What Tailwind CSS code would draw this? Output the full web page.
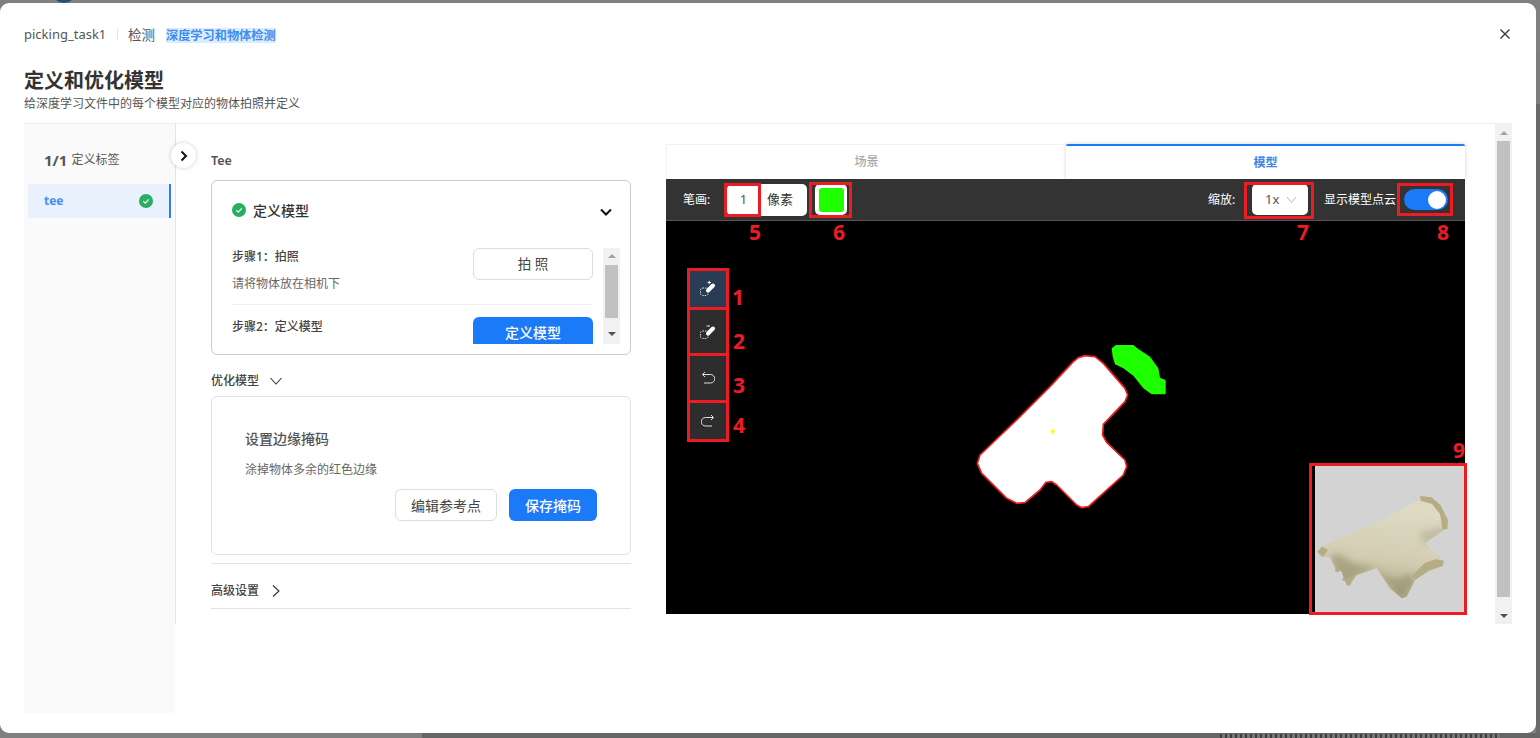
<!doctype html>
<html lang="zh-CN">
  <head>
    <meta charset="UTF-8" />
    <title>定义和优化模型</title>
    <script src="https://cdn.jsdelivr.net/npm/@tailwindcss/browser@4"></script>
  </head>
  <body class="bg-[#808080] overflow-hidden font-['Noto_Sans','Noto_Sans_CJK_SC',sans-serif]">
    <div class="relative w-[1540px] h-[738px] overflow-hidden">
      <!-- Dimmed page behind the dialog -->
      <div class="absolute left-[52px] top-[-10px] w-[24px] h-[13px] rounded-b-full bg-[#22507c]"></div>
      <div class="absolute left-[1536px] top-[52px] w-[4px] h-[52px] bg-[#7c7c7c]"></div>
      <div class="absolute left-[1536px] top-[104px] w-[4px] h-[634px] bg-[#6a6a6a]"></div>
      <div class="absolute left-[422px] top-[733px] w-[1118px] h-[5px] bg-[#666666]"></div>
      <div class="absolute left-[1220px] top-[734px] w-[280px] h-[4px] bg-[repeating-linear-gradient(90deg,#3f3f3f_0_2px,#777777_2px_5px)]"></div>

      <!-- Dialog -->
      <div class="absolute left-0 top-[3px] w-[1536px] h-[730px] bg-white rounded-[9px] flex flex-col">
        <header class="px-[24px] pt-[22px] relative">
          <div class="flex items-center h-[20px] text-[#555555]">
            <span class="text-[13px] w-[82px]">picking_task1</span>
            <span class="ml-[11px] w-px h-[12px] bg-[#e5e5e5]"></span>
            <span class="ml-[10px] text-[13.5px] w-[28px]">检测</span>
            <span class="ml-[10px] px-0 text-[12.2px] font-bold text-[#3f8df0] bg-[#dcebff] leading-[15px]">深度学习和物体检测</span>
          </div>
          <h1 class="mt-[24px] text-[20px] leading-[24px] font-bold text-[#333333]">定义和优化模型</h1>
          <p class="mt-[3px] text-[12px] leading-[16px] text-[#555555]">给深度学习文件中的每个模型对应的物体拍照并定义</p>
          <button class="absolute right-[23px] top-[23px] w-[16px] h-[16px] flex items-center justify-center">
            <svg width="12" height="12" viewBox="0 0 12 12" fill="none" stroke="#333333" stroke-width="1.3"><path d="M1.500 1.500l9 9M10.500 1.500l-9 9" /></svg>
          </button>
        </header>

        <section class="mx-[24px] mt-[11px] w-[1488px] h-[590px] border-t border-[#eeeeee] flex">
          <!-- Label sidebar -->
          <aside class="w-[151px] h-full bg-[#fafafa] pt-[26px] pl-[4px]">
            <div class="flex items-center h-[20px] pl-[16px] text-[#555555]">
              <span class="text-[15px] font-bold leading-none">1/1</span>
              <span class="ml-[4px] text-[12px]">定义标签</span>
            </div>
            <div class="mt-[14px] w-[143px] h-[34px] bg-[#e8f1fc] border-r-2 border-[#2f7ff0] flex items-center justify-between pl-[16px] pr-[16px]">
              <span class="text-[12px] font-bold text-[#4a90f0]">tee</span>
              <svg width="14" height="14" viewBox="0 0 14 14"><circle cx="7" cy="7" r="7" fill="#27ae60" /><path d="M4.200 7.200l2 2 3.600-3.800" fill="none" stroke="#fff" stroke-width="1.200" /></svg>
            </div>
          </aside>

          <div class="relative ml-0 w-[1337px] h-[500px] border-l border-[#e5e5e5] flex">
            <button class="absolute left-[-5px] top-[19px] w-[25px] h-[25px] rounded-full bg-white shadow-[0_0_4px_rgba(0,0,0,0.2)] flex items-center justify-center">
              <svg width="12" height="12" viewBox="0 0 12 12" fill="none" stroke="#111111" stroke-width="2"><path d="M3.500 1.500L8 6l-4.500 4.500" /></svg>
            </button>

            <!-- Model steps column -->
            <div class="ml-[35px] w-[420px] shrink-0">
              <div class="mt-[28px] h-[18px] flex items-center text-[12.5px] font-semibold text-[#555555]">Tee</div>
              <div class="mt-[10px] h-[175px] border border-[#cccccc] rounded-[6px] pl-[20px]">
                <div class="mt-[20px] h-[18px] flex items-center text-[14px] font-medium text-[#333333]">
                  <svg width="14" height="14" viewBox="0 0 14 14"><circle cx="7" cy="7" r="7" fill="#27ae60" /><path d="M4.200 7.200l2 2 3.600-3.800" fill="none" stroke="#fff" stroke-width="1.200" /></svg>
                  <span class="ml-[7px]">定义模型</span>
                  <svg class="ml-[290px] mt-[4px]" width="14" height="14" viewBox="0 0 14 14" fill="none" stroke="#111111" stroke-width="2"><path d="M2 4.500l5 5 5-5" /></svg>
                </div>
                <div class="mt-[29px] h-[96px] w-[388px] flex overflow-hidden">
                  <div class="w-[361px] shrink-0">
                    <div class="flex justify-between h-[56px]">
                      <div>
                        <p class="text-[12px] leading-[18px] font-medium text-[#444444]">步骤1：拍照</p>
                        <p class="mt-[9px] text-[12px] leading-[18px] text-[#666666]">请将物体放在相机下</p>
                      </div>
                      <button class="w-[120px] h-[32px] border border-[#dddddd] rounded-[6px] text-[13.500px] text-[#444444]">拍 照</button>
                    </div>
                    <div class="border-t border-[#eeeeee]"></div>
                    <div class="mt-[12px] flex justify-between">
                      <p class="mt-[1px] text-[12px] leading-[18px] font-medium text-[#444444]">步骤2：定义模型</p>
                      <button class="w-[120px] h-[32px] pb-[2px] bg-[#1a7af8] rounded-[6px] text-[14px] font-medium text-white">定义模型</button>
                    </div>
                  </div>
                  <div class="ml-[10px] w-[17px] h-full bg-[#f1f1f1] relative">
                    <div class="mx-auto mt-[6px] w-0 h-0 border-x-[4px] border-x-transparent border-b-[4px] border-b-[#a3a3a3]"></div>
                    <div class="absolute left-[2px] top-[17px] w-[13px] h-[53px] bg-[#c1c1c1]"></div>
                    <div class="absolute left-[5px] bottom-[8px] w-0 h-0 border-x-[4px] border-x-transparent border-t-[4px] border-t-[#505050]"></div>
                  </div>
                </div>
              </div>

              <div class="mt-[18px] h-[16px] flex items-center text-[12px] font-medium text-[#444444]">
                优化模型
                <svg class="ml-[10px]" width="14" height="10" viewBox="0 0 14 10" fill="none" stroke="#333333" stroke-width="1.100"><path d="M1.500 2l5.500 6 5.500-6" /></svg>
              </div>
              <div class="mt-[7px] h-[159px] border border-[#e2e2e2] rounded-[6px] pl-[33px] pr-[33px]">
                <p class="mt-[32px] text-[14px] leading-[20px] font-medium text-[#555555]">设置边缘掩码</p>
                <p class="mt-[12px] text-[12px] leading-[18px] text-[#666666]">涂掉物体多余的红色边缘</p>
                <div class="mt-[10px] flex justify-end gap-[12px]">
                  <button class="w-[102px] h-[32px] border border-[#dddddd] rounded-[6px] text-[14px] text-[#444444]">编辑参考点</button>
                  <button class="w-[88px] h-[32px] bg-[#1a7af8] rounded-[6px] text-[14px] font-medium text-white">保存掩码</button>
                </div>
              </div>
              <div class="mt-[8px] border-t border-[#e2e2e2]"></div>
              <div class="h-[44px] pt-[10px] flex items-center text-[12px] font-medium text-[#444444]">
                高级设置
                <svg class="ml-[12px]" width="10" height="14" viewBox="0 0 10 14" fill="none" stroke="#333333" stroke-width="1.100"><path d="M2 1.500l6 5.500-6 5.500" /></svg>
              </div>
              <div class="border-t border-[#e2e2e2]"></div>
            </div>

            <!-- Mask editor column -->
            <div class="ml-[35px] mt-[20px] w-[799px] shrink-0">
              <div class="flex h-[35px] text-[12px]">
                <div class="w-[400px] border-t border-l border-[#f2f2f2] flex items-center justify-center text-[#a8a8a8] font-medium">场景</div>
                <div class="w-[399px] border-t-2 border-[#1a7af8] rounded-t-[2px] shadow-[0_0_4px_rgba(0,0,0,0.18)] flex items-center justify-center text-[#3f84e0] font-bold">模型</div>
              </div>

              <!-- Toolbar -->
              <div class="relative h-[42px] bg-[#333333] border-b border-[#555555] flex items-center pl-[17px] pr-[17px] text-[12px] text-white">
                <span class="w-[29px]">笔画:</span>
                <div class="ml-[15px] w-[80px] h-[32px] bg-white rounded-[5px] flex items-center text-[13px]">
                  <span class="w-[33px] text-center text-[#555555]">1</span>
                  <span class="ml-[7px] text-[#333333]">像素</span>
                </div>
                <div class="ml-[8px] w-[32px] h-[31px] bg-white rounded-[5px] flex items-center justify-center">
                  <div class="w-[25px] h-[24px] bg-[#1eff00] rounded-[3px]"></div>
                </div>
                <span class="ml-auto w-[29px]">缩放:</span>
                <div class="ml-[15px] w-[56px] h-[31px] bg-white rounded-[5px] flex items-center pl-[13px] text-[13px] text-[#555555]">
                  1x
                  <svg class="ml-[7px]" width="11" height="8" viewBox="0 0 11 8" fill="none" stroke="#b5b5b5"><path d="M1 1l4.500 5.500L10 1" /></svg>
                </div>
                <span class="ml-[16px] w-[72px] whitespace-nowrap">显示模型点云</span>
                <div class="ml-[8px] w-[44px] h-[21px] rounded-full bg-[#1a7af8] relative">
                  <div class="absolute right-[2px] top-[1.500px] w-[18px] h-[18px] rounded-full bg-white"></div>
                </div>
                <!-- Numbered callout frames -->
                <div class="absolute left-[58px] top-[4px] w-[37px] h-[34px] border-[3px] border-[#ed1c24]"></div>
                <div class="absolute left-[143px] top-[3px] w-[43px] h-[36px] border-[3px] border-[#ed1c24]"></div>
                <div class="absolute left-[578px] top-[3px] w-[70px] h-[37px] border-[3px] border-[#ed1c24]"></div>
                <div class="absolute left-[731px] top-[4px] w-[56px] h-[33px] border-[3px] border-[#ed1c24]"></div>
              </div>

              <!-- Canvas -->
              <div class="relative h-[393px] bg-black text-[21px] leading-[24px] font-bold text-[#ed1c24]">
                <span class="absolute left-[83px] top-[-1px]">5</span>
                <span class="absolute left-[167px] top-[-1px]">6</span>
                <span class="absolute left-[631px] top-[-1px]">7</span>
                <span class="absolute left-[771px] top-[-1px]">8</span>
                <span class="absolute left-[66px] top-[64px]">1</span>
                <span class="absolute left-[67px] top-[108px]">2</span>
                <span class="absolute left-[67px] top-[152px]">3</span>
                <span class="absolute left-[67px] top-[192px]">4</span>
                <span class="absolute left-[787px] top-[217px]">9</span>

                <div class="absolute left-[21px] top-[47px] w-[42px] border-[3px] border-[#ed1c24] bg-[#ed1c24] flex flex-col gap-[3px]">
                  <button class="h-[36px] bg-[#2a3b54] flex items-center justify-center">
                    <svg width="18" height="18" viewBox="0 0 18 18"><rect x="1.500" y="8" width="7.500" height="7.500" rx="2" fill="none" stroke="#d8d8d8" stroke-dasharray="1.500 1" /><path d="M9 10.500L14 5.500" stroke="#fff" stroke-width="4" stroke-linecap="round" /><path d="M8.500 2.500h3.500M10.250 0.800v3.400" stroke="#fff" stroke-width="0.900" /></svg>
                  </button>
                  <button class="h-[43px] bg-[#2d2d2d] flex items-center justify-center">
                    <svg width="18" height="18" viewBox="0 0 18 18"><rect x="1.500" y="8" width="7.500" height="7.500" rx="2" fill="none" stroke="#d8d8d8" stroke-dasharray="1.500 1" /><path d="M9 10.500L14 5.500" stroke="#fff" stroke-width="4" stroke-linecap="round" /><path d="M7.500 3h3.500" stroke="#fff" stroke-width="0.900" /></svg>
                  </button>
                  <button class="h-[44px] bg-[#2d2d2d] flex items-center justify-center">
                    <svg width="14" height="14" viewBox="0 0 14 14" fill="none" stroke="#e0e0e0" stroke-width="1"><path d="M4 1L1.500 3.500 4 6" /><path d="M1.500 3.500h8a3 3 0 0 1 0 8.500H3" /></svg>
                  </button>
                  <button class="h-[36px] bg-[#2d2d2d] flex items-center justify-center">
                    <svg width="14" height="14" viewBox="0 0 14 14" fill="none" stroke="#e0e0e0" stroke-width="1"><path d="M10 1l2.500 2.500L10 6" /><path d="M12.500 3.500h-8a3 3 0 0 0 0 8.500H11" /></svg>
                  </button>
                </div>

                <!-- Painted mask -->
                <svg class="absolute left-[294px] top-[114px]" width="220" height="185" viewBox="0 0 660 555">
                  <path d="M355 68L375 62L405 65L430 85L495 160L503 180L495 200L430 268L428 300L440 322L495 375L500 395L490 420L385 515L365 518L350 510L290 450L275 440L258 442L240 465L195 503L170 505L140 490L65 415L52 385L60 360L180 245L270 155L340 80Z" fill="#ffffff" stroke="#ee1c1c" stroke-width="5" stroke-linejoin="round" />
                  <path d="M455 40L468 30L520 30L535 42L570 65L595 100L600 128L617 135L617 178L575 178L550 160L520 122L490 100L465 88L458 65Z" fill="#1eff00" />
                  <path d="M270 290h15M277.500 282v15" stroke="#ffff00" stroke-width="3" />
                </svg>

                <!-- Model preview -->
                <div class="absolute left-[643px] top-[242px] w-[158px] h-[152px] border-[3px] border-[#ed1c24] bg-[#d3d3d3]">
                  <div class="h-full border-l-[3px] border-black relative">
                    <svg class="absolute left-0 top-0" width="150" height="146" viewBox="45 78 450 438">
                      <defs>
                        <linearGradient id="teeBody" x1="0.500" y1="0.100" x2="0.350" y2="1">
                          <stop offset="0" stop-color="#dedac4" />
                          <stop offset="0.550" stop-color="#d2cdb2" />
                          <stop offset="1" stop-color="#aca682" />
                        </linearGradient>
                        <clipPath id="teeClip">
                          <path d="M55 335L65 320L120 295L250 235L358 180L362 168L395 175L420 200L440 240L440 265L410 285L375 310L410 340L430 365L420 380L385 395L345 420L320 470L305 475L270 445L230 385L170 405L150 435L135 425L125 395L105 385L90 350L70 350Z" />
                        </clipPath>
                        <filter id="teeSoft" x="-20%" y="-20%" width="140%" height="140%"><feGaussianBlur stdDeviation="10" /></filter>
                      </defs>
                      <path d="M55 335L65 320L120 295L250 235L358 180L362 168L395 175L420 200L440 240L440 265L410 285L375 310L410 340L430 365L420 380L385 395L345 420L320 470L305 475L270 445L230 385L170 405L150 435L135 425L125 395L105 385L90 350L70 350Z" fill="url(#teeBody)" />
                      <g clip-path="url(#teeClip)">
                        <path d="M355 275L445 255L440 300L375 315Z" fill="#a9a583" opacity="0.45" filter="url(#teeSoft)" />
                        <path d="M305 480L345 425L330 400L290 420L250 400L230 385Z" fill="#8f8963" opacity="0.55" filter="url(#teeSoft)" />
                        <path d="M90 350L130 425L170 405L230 380L170 375L110 340Z" fill="#95906b" opacity="0.6" filter="url(#teeSoft)" />
                      </g>
                      <g fill="#b5ab84">
                        <path d="M360 168L395 172L422 196L444 240L442 268L428 268L420 222L396 192L362 182Z" />
                        <path d="M335 408L375 368L408 358L432 362L428 378L385 392L348 418Z" />
                        <path d="M52 335L66 320L84 330L68 352Z" />
                        <circle cx="112" cy="390" r="7" /><circle cx="145" cy="430" r="7" /><circle cx="132" cy="418" r="5" />
                      </g>
                    </svg>
                  </div>
                </div>
              </div>
            </div>

            <!-- Page scrollbar -->
            <div class="ml-[30px] w-[17px] h-full bg-[#f1f1f1] relative">
              <div class="mx-auto mt-[7px] w-0 h-0 border-x-[4px] border-x-transparent border-b-[4px] border-b-[#a3a3a3]"></div>
              <div class="absolute left-[2px] top-[17px] w-[13px] h-[456px] bg-[#c1c1c1]"></div>
              <div class="absolute left-[5px] bottom-[6px] w-0 h-0 border-x-[4px] border-x-transparent border-t-[4px] border-t-[#505050]"></div>
            </div>
          </div>
        </section>
      </div>
    </div>
  </body>
</html>
